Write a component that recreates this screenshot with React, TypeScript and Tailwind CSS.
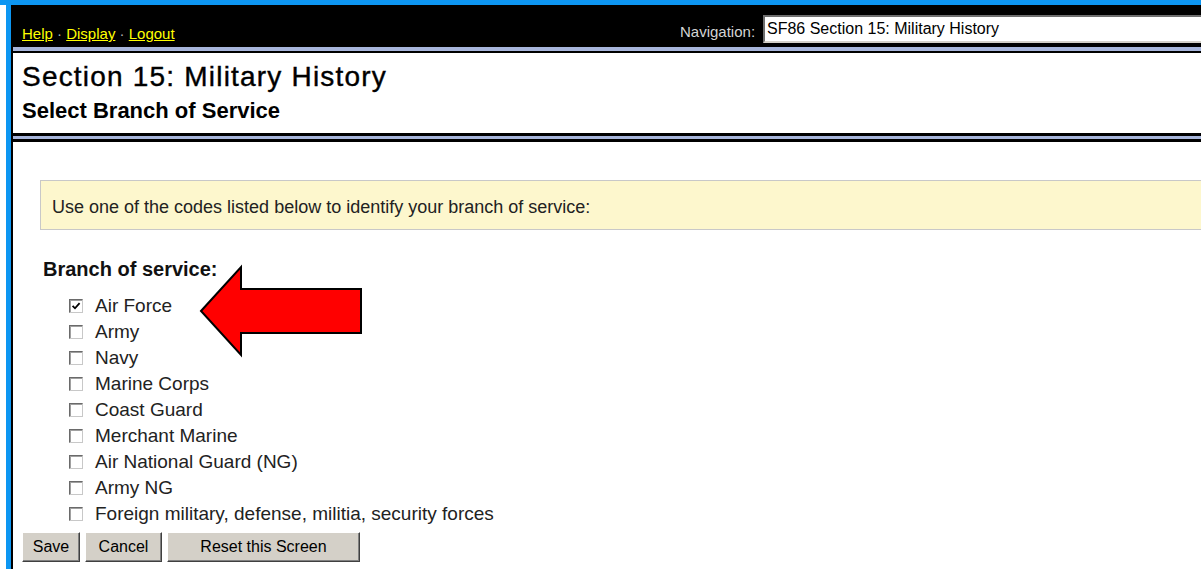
import { useState } from 'react'

const BRANCHES = [
  'Air Force',
  'Army',
  'Navy',
  'Marine Corps',
  'Coast Guard',
  'Merchant Marine',
  'Air National Guard (NG)',
  'Army NG',
  'Foreign military, defense, militia, security forces',
]

const BUTTONS = [
  { label: 'Save', width: 'w-[58px]' },
  { label: 'Cancel', width: 'w-[77px]' },
  { label: 'Reset this Screen', width: 'w-[193px]' },
]

function Checkbox({ checked }: { checked: boolean }) {
  return (
    <span className="flex h-[14px] w-[14px] shrink-0 items-center justify-center border border-t-[#6a6a6a] border-l-[#6a6a6a] border-b-[#c8c8c8] border-r-[#c8c8c8] bg-white shadow-[inset_1px_1px_0_#a0a0a0]">
      {checked && (
        <svg viewBox="0 0 10 10" className="h-[10px] w-[10px]">
          <path d="M1.6 4.8 L4 7.3 L8.6 2.2" fill="none" stroke="#000" strokeWidth="1.8" />
        </svg>
      )}
    </span>
  )
}

export default function App() {
  const [picked, setPicked] = useState<string[]>(['Air Force'])

  function toggle(b: string) {
    setPicked((p) => (p.includes(b) ? p.filter((x) => x !== b) : [...p, b]))
  }

  return (
    <div className="relative h-[569px] w-full overflow-hidden bg-white font-['Liberation_Sans',Arial,sans-serif] text-black">
      <div className="h-[5px] bg-[#0d96f2]" />
      <div className="flex h-[564px]">
        <div className="w-[6px] shrink-0" />
        <div className="w-[5px] shrink-0 bg-[#0d96f2]" />
        <div className="w-[2px] shrink-0 bg-black" />

        <div className="flex min-w-0 flex-1 flex-col">
          {/* Top bar */}
          <div className="flex h-[42px] shrink-0 items-end overflow-hidden bg-black pb-[4px] pl-[9px]">
            <div className="mb-[1px] w-[658px] shrink-0 text-[15px] leading-[17px]">
              <a href="#" className="text-[#ffff00] underline">Help</a>
              <span className="text-[#b0b0b0]"> · </span>
              <a href="#" className="text-[#ffff00] underline">Display</a>
              <span className="text-[#b0b0b0]"> · </span>
              <a href="#" className="text-[#ffff00] underline">Logout</a>
            </div>
            <span className="mb-[3px] w-[75px] shrink-0 text-[15px] leading-[17px] text-[#d4d4d4]">Navigation:</span>
            <div className="ml-[8px] flex h-[28px] w-[470px] shrink-0 items-center border-2 border-t-[#6e6e6e] border-l-[#6e6e6e] border-b-[#d4d0c8] border-r-[#d4d0c8] bg-white pl-[2px] text-[16px] leading-[18px]">
              SF86 Section 15: Military History
            </div>
          </div>
          <div className="h-[4px] shrink-0 bg-[#a7b5db]" />
          <div className="h-[2px] shrink-0 bg-black" />

          {/* Page title */}
          <div className="h-[80px] shrink-0 pl-[9px] pt-[8px]">
            <h1 className="text-[28px] leading-[32px] tracking-[1.2px] [-webkit-text-stroke:0.4px_#000]">Section 15: Military History</h1>
            <h2 className="mt-[5px] text-[22px] font-bold leading-[26px]">Select Branch of Service</h2>
          </div>
          <div className="h-[3px] shrink-0 bg-black" />
          <div className="h-[3px] shrink-0 bg-[#a7b5db]" />
          <div className="h-[3px] shrink-0 bg-black" />

          {/* Form */}
          <div className="flex flex-col">
            <div className="ml-[27px] mt-[38px] flex h-[50px] items-center border border-r-0 border-[#c8c8c8] bg-[#fdf7cd] pl-[11px] pt-[3px] text-[18px] leading-[22px] text-[#222]">
              Use one of the codes listed below to identify your branch of service:
            </div>

            <p className="ml-[30px] mt-[27px] text-[20px] font-bold leading-[24px] text-[#111]">Branch of service:</p>

            <ul className="ml-[56px] mt-[12px]">
              {BRANCHES.map((b) => (
                <li
                  key={b}
                  onClick={() => toggle(b)}
                  className="flex h-[26px] cursor-default items-center gap-[12px] text-[19px] leading-[26px] text-[#222]"
                >
                  <Checkbox checked={picked.includes(b)} />
                  <span>{b}</span>
                </li>
              ))}
            </ul>

            <div className="ml-[9px] mt-[5px] flex gap-[5px]">
              {BUTTONS.map((btn) => (
                <button
                  key={btn.label}
                  className={`${btn.width} h-[30px] border border-t-white border-l-white border-b-[#404040] border-r-[#404040] bg-[#d4d0c8] text-[16px] leading-[18px] text-black shadow-[inset_-1px_-1px_0_#808080]`}
                >
                  {btn.label}
                </button>
              ))}
            </div>
          </div>
        </div>
      </div>

      {/* Red pointer arrow */}
      <svg className="absolute left-[198px] top-[264px]" width="166" height="95" viewBox="198 264 166 95">
        <polygon
          points="201,311 241,267 241,289 361,289 361,333 241,333 241,355"
          fill="#ff0000"
          stroke="#000"
          strokeWidth="2"
          strokeLinejoin="miter"
        />
      </svg>
    </div>
  )
}
